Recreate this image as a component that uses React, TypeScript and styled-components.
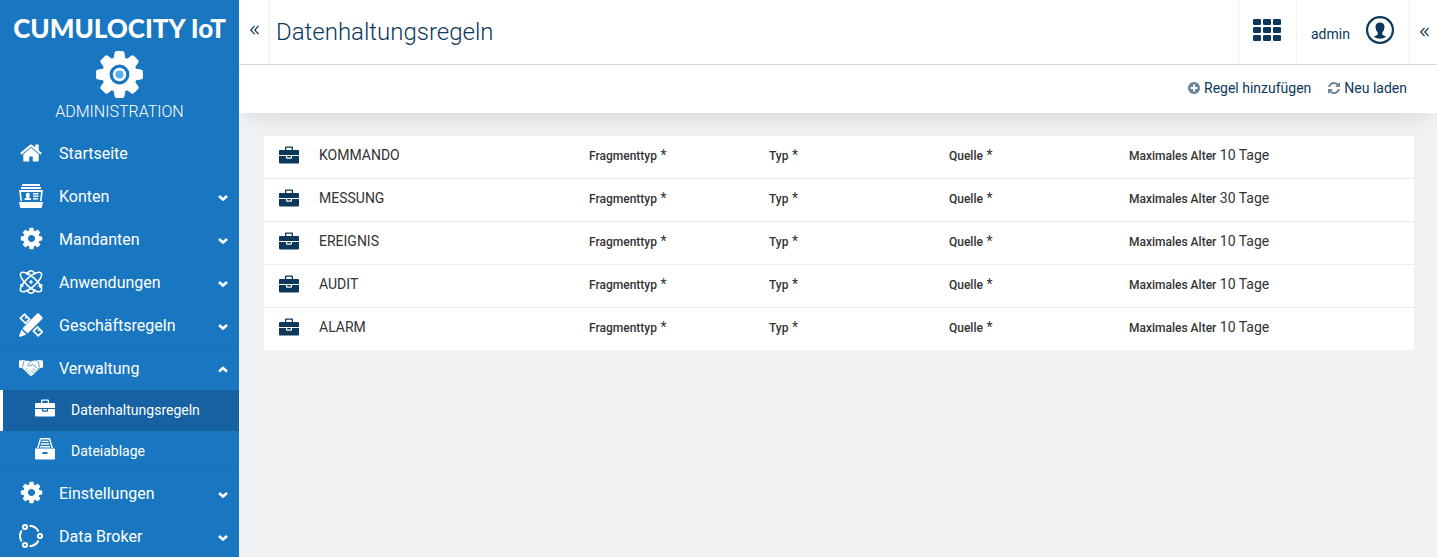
import React from "react";
import styled, { createGlobalStyle } from "styled-components";

const colors = {
  brand: "#1976c0",
  brandDark: "#1561a1",
  brandLine: "#176fb5",
  navy: "#0b385b",
  text: "#333333",
  line: "#d8dadc",
  softLine: "#f0f1f2",
  page: "#f1f2f4",
  muted: "#6c8599",
};

const GlobalStyle = createGlobalStyle`
  *, *::before, *::after { box-sizing: border-box; }
  body {
    margin: 0;
    background: ${colors.page};
    color: ${colors.text};
    font-family: Roboto, "Liberation Sans", sans-serif;
    font-size: 14px;
    line-height: 20px;
  }
  button { font: inherit; color: inherit; background: none; border: 0; padding: 0; cursor: pointer; }
  a { color: inherit; text-decoration: none; }
  ul { list-style: none; margin: 0; padding: 0; }
  svg { display: block; flex: none; }
`;

/* ---------- layout ---------- */

const Shell = styled.div`
  display: flex;
  height: 100vh;
  overflow: hidden;
`;

const Sidebar = styled.aside`
  flex: none;
  width: 239px;
  overflow: hidden;
  background: ${colors.brand};
  color: #fff;
`;

const Brand = styled.header`
  display: flex;
  flex-direction: column;
  align-items: center;
  height: 132px;
  padding-top: 14px;
`;

const BrandName = styled.div`
  font-family: Lato, "Liberation Sans", sans-serif;
  font-size: 26px;
  font-weight: 900;
  line-height: 28px;
  white-space: nowrap;
`;

const BrandGear = styled.svg`
  margin: 9px 0 4px;
`;

const BrandApp = styled.div`
  font-size: 16px;
  font-weight: 300;
  line-height: 20px;
`;

const NavGroup = styled.li<{ $open?: boolean }>`
  box-shadow: ${(p) => (p.$open ? `inset 0 1px ${colors.brandLine}, inset 0 -1px ${colors.brandLine}` : "none")};
`;

const NavButton = styled.button`
  display: flex;
  align-items: center;
  gap: 16px;
  width: 100%;
  height: 43px;
  padding: 0 11px 2px 19px;
  font-size: 16px;
  line-height: 24px;
  text-align: left;
`;

const NavIcon = styled.span`
  display: flex;
  justify-content: center;
  width: 24px;
`;

const NavLabel = styled.span`
  flex: 1;
  padding-top: 2px;
`;

const NavChevron = styled.svg`
  margin-top: 4px;
`;

const SubLink = styled.a<{ $active?: boolean }>`
  display: flex;
  align-items: center;
  gap: 14px;
  height: 41px;
  padding: 0 0 6px 30px;
  border-left: 3px solid ${(p) => (p.$active ? "#fff" : "transparent")};
  background: ${(p) => (p.$active ? colors.brandDark : "transparent")};
`;

const SubLabel = styled.span`
  padding-top: 5px;
`;

const Main = styled.main`
  flex: 1;
  min-width: 0;
  overflow: hidden;
`;

const TopBar = styled.header`
  display: flex;
  height: 65px;
  background: #fff;
  border-bottom: 1px solid ${colors.line};
  color: ${colors.navy};
`;

const Toggle = styled.button<{ $side: "left" | "right" }>`
  display: flex;
  align-items: center;
  justify-content: center;
  width: ${(p) => (p.$side === "left" ? 31 : 28)}px;
  padding: ${(p) => (p.$side === "left" ? "0 0 4px" : "0 0 0 2px")};
  border-${(p) => (p.$side === "left" ? "right" : "left")}: 1px solid ${colors.softLine};
`;

const Title = styled.h1`
  flex: 1;
  margin: 0;
  padding: 16px 0 0 6px;
  font-size: 24px;
  font-weight: 300;
  line-height: 32px;
`;

const AppsButton = styled.button`
  display: flex;
  width: 58px;
  padding: 19px 0 0 14px;
  border-left: 1px solid ${colors.softLine};
`;

const UserButton = styled.button`
  display: flex;
  gap: 16px;
  width: 113px;
  padding: 16px 0 0 14px;
  border-left: 1px solid ${colors.softLine};
`;

const UserName = styled.span`
  padding-top: 8px;
`;

const ActionBar = styled.div`
  display: flex;
  align-items: center;
  justify-content: flex-end;
  gap: 16px;
  height: 48px;
  padding: 0 30px 2px 0;
  background: #fff;
  color: ${colors.navy};
  box-shadow: 0 12px 24px -10px rgba(0, 20, 30, 0.14);
`;

const Action = styled.button`
  display: flex;
  align-items: center;
  gap: 3px;
  svg { color: ${colors.muted}; }
`;

const Rules = styled.ul`
  margin: 23px 23px 0 25px;
  background: #fff;
`;

const Rule = styled.li`
  display: grid;
  grid-template-columns: 55px 54fr 36fr 36fr 36fr 57fr;
  align-items: start;
  padding: 9px 0 12px;
  & + & { border-top: 1px solid #ecedef; }
`;

const RuleIcon = styled.span`
  padding: 1px 0 0 15px;
  color: ${colors.navy};
`;

const RuleName = styled.a``;

const Field = styled.span`
  white-space: nowrap;
`;

const FieldLabel = styled.span`
  font-size: 12px;
  font-weight: 500;
`;

/* ---------- icons ---------- */

const FontIcon = ({ d, size }: { d: string; size: number }) => (
  <svg width={size} height={size} viewBox="0 0 1792 1792" fill="currentColor" aria-hidden="true">
    <path d={d} />
  </svg>
);

const COG =
  "M1152 896q0-106-75-181t-181-75-181 75-75 181 75 181 181 75 181-75 75-181zm512-109v222q0 12-8 23t-20 13l-185 28q-19 54-39 91 35 50 107 138 10 12 10 25t-9 23q-27 37-99 108t-94 71q-12 0-26-9l-138-108q-44 23-91 38-16 136-29 186-7 28-36 28h-222q-14 0-24.5-8.5t-11.5-21.5l-28-184q-49-16-90-37l-141 107q-10 9-25 9-14 0-25-11-126-114-165-168-7-10-7-23 0-12 8-23 15-21 51-66.5t54-70.5q-27-50-41-99l-183-27q-13-2-21-12.5t-8-23.5v-222q0-12 8-23t19-13l186-28q14-46 39-92-40-57-107-138-10-12-10-24 0-10 9-23 26-36 98.5-107.5t94.5-71.5q13 0 26 10l138 107q44-23 91-38 16-136 29-186 7-28 36-28h222q14 0 24.5 8.5t11.5 21.5l28 184q49 16 90 37l142-107q9-9 24-9 13 0 25 10 129 119 165 170 7 8 7 22 0 12-8 23-15 21-51 66.5t-54 70.5q26 50 41 98l183 28q13 2 21 12.5t8 23.5z";
const HOME =
  "M1472 992v480q0 26-19 45t-45 19h-384v-384h-256v384h-384q-26 0-45-19t-19-45v-480q0-1 .5-3t.5-3l575-474 575 474q1 2 1 6zm223-69l-62 74q-8 9-21 11h-3q-13 0-21-7l-692-577-692 577q-12 8-24 7-13-2-21-11l-62-74q-8-10-7-23.5t11-21.5l719-599q32-26 76-26t76 26l244 204v-195q0-14 9-23t23-9h192q14 0 23 9t9 23v408l219 182q10 8 11 21.5t-7 23.5z";
const PLUS =
  "M1344 960v-128q0-26-19-45t-45-19h-256v-256q0-26-19-45t-45-19h-128q-26 0-45 19t-19 45v256h-256q-26 0-45 19t-19 45v128q0 26 19 45t45 19h256v256q0 26 19 45t45 19h128q26 0 45-19t19-45v-256h256q26 0 45-19t19-45zm320-64q0 209-103 385.5t-279.5 279.5-385.5 103-385.5-103-279.5-279.5-103-385.5 103-385.5 279.5-279.5 385.5-103 385.5 103 279.5 279.5 103 385.5z";
const REFRESH =
  "M1639 1056q0 5-1 7-64 268-268 434.5t-478 166.5q-146 0-282.5-55t-243.5-157l-129 129q-19 19-45 19t-45-19-19-45v-448q0-26 19-45t45-19h448q26 0 45 19t19 45-19 45l-137 137q71 66 161 102t187 36q134 0 250-65t186-179q11-17 53-117 8-23 30-23h192q13 0 22.5 9.5t9.5 22.5zm25-800v448q0 26-19 45t-45 19h-448q-26 0-45-19t-19-45 19-45l138-138q-148-137-349-137-134 0-250 65t-186 179q-11 17-53 117-8 23-30 23h-199q-13 0-22.5-9.5t-9.5-22.5v-7q65-268 270-434.5t480-166.5q146 0 284 55.5t245 156.5l130-129q19-19 45-19t45 19 19 45z";

const GearLogo = () => (
  <BrandGear width="47" height="47" viewBox="-23.5 -23.5 47 47" aria-hidden="true">
    <g fill="#fff">
      <circle r="17.5" />
      {[0, 45, 90, 135, 180, 225, 270, 315].map((a) => (
        <path key={a} transform={`rotate(${a})`} d="M-6-15L-5-21.500Q-4.700-23.400-2.900-23.400H2.900Q4.700-23.400 5-21.500L6-15Z" />
      ))}
    </g>
    <circle r="8.3" fill="none" stroke={colors.brand} strokeWidth="3.2" />
    <circle r="4" fill="#5aaeee" />
  </BrandGear>
);

const AccountsIcon = () => (
  <svg width="24" height="24" viewBox="0 0 24 24" fill="currentColor" aria-hidden="true">
    <path d="M3 0h18v2H3zM2 3h20v2H2zM0 18h24l-1 5q-.2 1-1 1H2q-.8 0-1-1z" />
    <path d="M0 6h24l-1.500 11H21l1-9H2l1 9H1.500z" />
    <path d="M5.500 16v-1.500l2.300-1q-1-1-1-2.500 0-2.200 2-2.200t2 2.200q0 1.500-1 2.500l2.200 1V16zM14 9h5.500v1.500H14zM14 11.500h5.500v1.500H14zM14 14h5v1.500h-5z" />
  </svg>
);

const AtomIcon = () => (
  <svg width="24" height="24" viewBox="0 0 24 24" fill="none" stroke="currentColor" strokeWidth="1.600" aria-hidden="true">
    <ellipse cx="12" cy="12" rx="13.500" ry="5" transform="rotate(42 12 12)" />
    <ellipse cx="12" cy="12" rx="13.500" ry="5" transform="rotate(138 12 12)" />
    <path d="M8 4.500Q9.500.8 12 .8t4 3.700M8 19.500q1.500 3.700 4 3.700t4-3.700" />
    <g fill="currentColor" stroke="none">
      <circle cx="12" cy="12" r="1.700" />
      <circle cx="21.500" cy="15.800" r="2" />
      <circle cx="2.800" cy="15.500" r="1.700" />
      <circle cx="9" cy="3.500" r="1.700" />
    </g>
  </svg>
);

const PencilRulerIcon = () => (
  <svg width="24" height="24" viewBox="0 0 24 24" fill="currentColor" aria-hidden="true">
    <path
      fillRule="evenodd"
      d="M5.500 0L.2 5.300l6.300 6.300 5.300-5.300zM5.500 2.500l1.300 1.300-1.200 1.200 1 1 1.200-1.200 1.500 1.500-2.800 2.800L2.700 5.300z"
    />
    <path
      fillRule="evenodd"
      d="M18.500 12.700l-5.300 5.300 6 6 5.300-5.300zM18.500 15.200l1.200 1.200-1.200 1.200 1 1 1.200-1.200 1.300 1.300-2.800 2.800-3.500-3.500z"
    />
    <path d="M18.200 .6q.8-.8 1.600 0l3.600 3.600q.8.800 0 1.600L8.600 20.600 3.400 15.400zM2.500 16.600l4.900 4.900L1 24 0 23z" />
  </svg>
);

const HandshakeIcon = () => (
  <svg width="24" height="16" viewBox="0 0 24 16" aria-hidden="true">
    <path
      fill="currentColor"
      d="M0 .5L5 0l1.500.8Q9.500 .3 12 1.500 14.500 .2 17.500.8L19 0l5 .5V7.500l-3.500.7Q17 12 13.500 15.200q-1.500 1-3 0Q7 12 3.500 8.200L0 7.500z"
    />
    <path
      fill="none"
      stroke={colors.brand}
      strokeWidth=".7"
      d="M5 .8L3.500 7.500M19 .8L20.500 7.500M12 1.600L8.500 5.200q1.500 2 4-.2l1.500-.4 5.300 4.700M6.300 10.500l1.800-2M8.300 12.500l1.800-2M10.500 14l1.500-1.500M14 8.500l3 3M12.200 10.500l2.500 2.500"
    />
  </svg>
);

const BrokerIcon = () => (
  <svg width="24" height="24" viewBox="0 0 24 24" fill="none" stroke="currentColor" strokeWidth="2" aria-hidden="true">
    <circle cx="6" cy="3" r="2.100" />
    <circle cx="21" cy="12" r="2.100" />
    <circle cx="6" cy="21" r="2.100" />
    <path d="M2.700 6.500Q1 9 1 12t1.700 5.500M10.500 1.800q6.500.5 9 5.700M10.500 22.200q6.500-.5 9-5.700" />
  </svg>
);

const BriefcaseIcon = () => (
  <svg width="20" height="18" viewBox="0 0 20 18" fill="currentColor" aria-hidden="true">
    <path
      fillRule="evenodd"
      d="M6 4V1.500Q6 .5 7 .5h6q1 0 1 1V4h5q1 0 1 1v4H0V5q0-1 1-1zM7.300 4h5.400V1.800H7.300zM0 10h7v1.800q0 1 1 1h4q1 0 1-1V10h7v6.500q0 1-1 1H1q-1 0-1-1zM8.200 10h3.600v1.600H8.200z"
    />
  </svg>
);

const DrawerIcon = () => (
  <svg width="20" height="22" viewBox="0 0 20 22" fill="currentColor" aria-hidden="true">
    <path d="M5 0h10l3 10h-1.600L14 1.400H6L3.600 10H2zM6.800 2.700h6.400l.3 1.400h-7zM6 5.300h8l.3 1.400H5.700zM5.200 7.900h9.600l.3 1.600H4.900z" />
    <path fillRule="evenodd" d="M0 10.500h20V20q0 1.500-1.500 1.500h-17Q0 21.500 0 20zM7.500 14v2h5v-2z" />
  </svg>
);

const Chevron = ({ up }: { up?: boolean }) => (
  <NavChevron width="10" height="8" viewBox="0 0 10 8" fill="none" stroke="currentColor" strokeWidth="2.600" aria-hidden="true">
    <path d={up ? "M1 5.500l4-3.500 4 3.500" : "M1 2l4 3.500 4-3.500"} />
  </NavChevron>
);

const DoubleAngle = () => (
  <svg width="9" height="10" viewBox="0 0 9 10" fill="none" stroke="currentColor" strokeWidth="1.200" aria-hidden="true">
    <path d="M4.500.8L.8 5l3.700 4.200M8.500.8L4.800 5l3.700 4.200" />
  </svg>
);

const AppsIcon = () => (
  <svg width="28" height="22" viewBox="0 0 28 22" fill="currentColor" aria-hidden="true">
    {[0, 8, 16].map((y) => [0, 10, 20].map((x) => <rect key={`${x}-${y}`} x={x} y={y} width="8" height="6" rx="1.300" />))}
  </svg>
);

const UserIcon = () => (
  <svg width="28" height="28" viewBox="0 0 28 28" aria-hidden="true">
    <circle cx="14" cy="14" r="12.900" fill="none" stroke="currentColor" strokeWidth="2.200" />
    <path
      fill="currentColor"
      d="M14 6.500q4.500 0 4.500 4.500 0 3.500-2.200 5.600v1.600q0 1 4.200 2.300Q17.500 22.700 14 22.700t-6.500-2.200q4.200-1.300 4.200-2.300v-1.600Q9.500 14.500 9.500 11q0-4.500 4.500-4.500z"
    />
  </svg>
);

/* ---------- data ---------- */

type NavItem = {
  label: string;
  icon: React.ReactNode;
  leaf?: boolean;
  children?: { label: string; icon: React.ReactNode; active?: boolean }[];
};

const nav: NavItem[] = [
  { label: "Startseite", icon: <FontIcon d={HOME} size={24} />, leaf: true },
  { label: "Konten", icon: <AccountsIcon /> },
  { label: "Mandanten", icon: <FontIcon d={COG} size={25} /> },
  { label: "Anwendungen", icon: <AtomIcon /> },
  { label: "Geschäftsregeln", icon: <PencilRulerIcon /> },
  {
    label: "Verwaltung",
    icon: <HandshakeIcon />,
    children: [
      { label: "Datenhaltungsregeln", icon: <BriefcaseIcon />, active: true },
      { label: "Dateiablage", icon: <DrawerIcon /> },
    ],
  },
  { label: "Einstellungen", icon: <FontIcon d={COG} size={25} /> },
  { label: "Data Broker", icon: <BrokerIcon /> },
];

const rules = [
  { name: "KOMMANDO", age: "10 Tage" },
  { name: "MESSUNG", age: "30 Tage" },
  { name: "EREIGNIS", age: "10 Tage" },
  { name: "AUDIT", age: "10 Tage" },
  { name: "ALARM", age: "10 Tage" },
];

const LabelledValue = ({ label, value }: { label: string; value: string }) => (
  <Field>
    <FieldLabel>{label}</FieldLabel> {value}
  </Field>
);

export default function App() {
  return (
    <>
      <GlobalStyle />
      <Shell>
        <Sidebar>
          <Brand>
            <BrandName>CUMULOCITY IoT</BrandName>
            <GearLogo />
            <BrandApp>ADMINISTRATION</BrandApp>
          </Brand>
          <nav>
            <ul>
              {nav.map((item) => (
                <NavGroup key={item.label} $open={!!item.children}>
                  <NavButton type="button" aria-expanded={item.leaf ? undefined : !!item.children}>
                    <NavIcon>{item.icon}</NavIcon>
                    <NavLabel>{item.label}</NavLabel>
                    {!item.leaf && <Chevron up={!!item.children} />}
                  </NavButton>
                  {item.children && (
                    <ul>
                      {item.children.map((child) => (
                        <li key={child.label}>
                          <SubLink href="#" $active={child.active} aria-current={child.active ? "page" : undefined}>
                            <NavIcon>{child.icon}</NavIcon>
                            <SubLabel>{child.label}</SubLabel>
                          </SubLink>
                        </li>
                      ))}
                    </ul>
                  )}
                </NavGroup>
              ))}
            </ul>
          </nav>
        </Sidebar>
        <Main>
          <TopBar>
            <Toggle type="button" $side="left" aria-label="Navigation einklappen">
              <DoubleAngle />
            </Toggle>
            <Title>Datenhaltungsregeln</Title>
            <AppsButton type="button" aria-label="Anwendungen wechseln">
              <AppsIcon />
            </AppsButton>
            <UserButton type="button">
              <UserName>admin</UserName>
              <UserIcon />
            </UserButton>
            <Toggle type="button" $side="right" aria-label="Seitenleiste öffnen">
              <DoubleAngle />
            </Toggle>
          </TopBar>
          <ActionBar>
            <Action type="button">
              <FontIcon d={PLUS} size={14} />
              Regel hinzufügen
            </Action>
            <Action type="button">
              <FontIcon d={REFRESH} size={14} />
              Neu laden
            </Action>
          </ActionBar>
          <Rules>
            {rules.map((rule) => (
              <Rule key={rule.name}>
                <RuleIcon>
                  <BriefcaseIcon />
                </RuleIcon>
                <RuleName href="#">{rule.name}</RuleName>
                <LabelledValue label="Fragmenttyp" value="*" />
                <LabelledValue label="Typ" value="*" />
                <LabelledValue label="Quelle" value="*" />
                <LabelledValue label="Maximales Alter" value={rule.age} />
              </Rule>
            ))}
          </Rules>
        </Main>
      </Shell>
    </>
  );
}
